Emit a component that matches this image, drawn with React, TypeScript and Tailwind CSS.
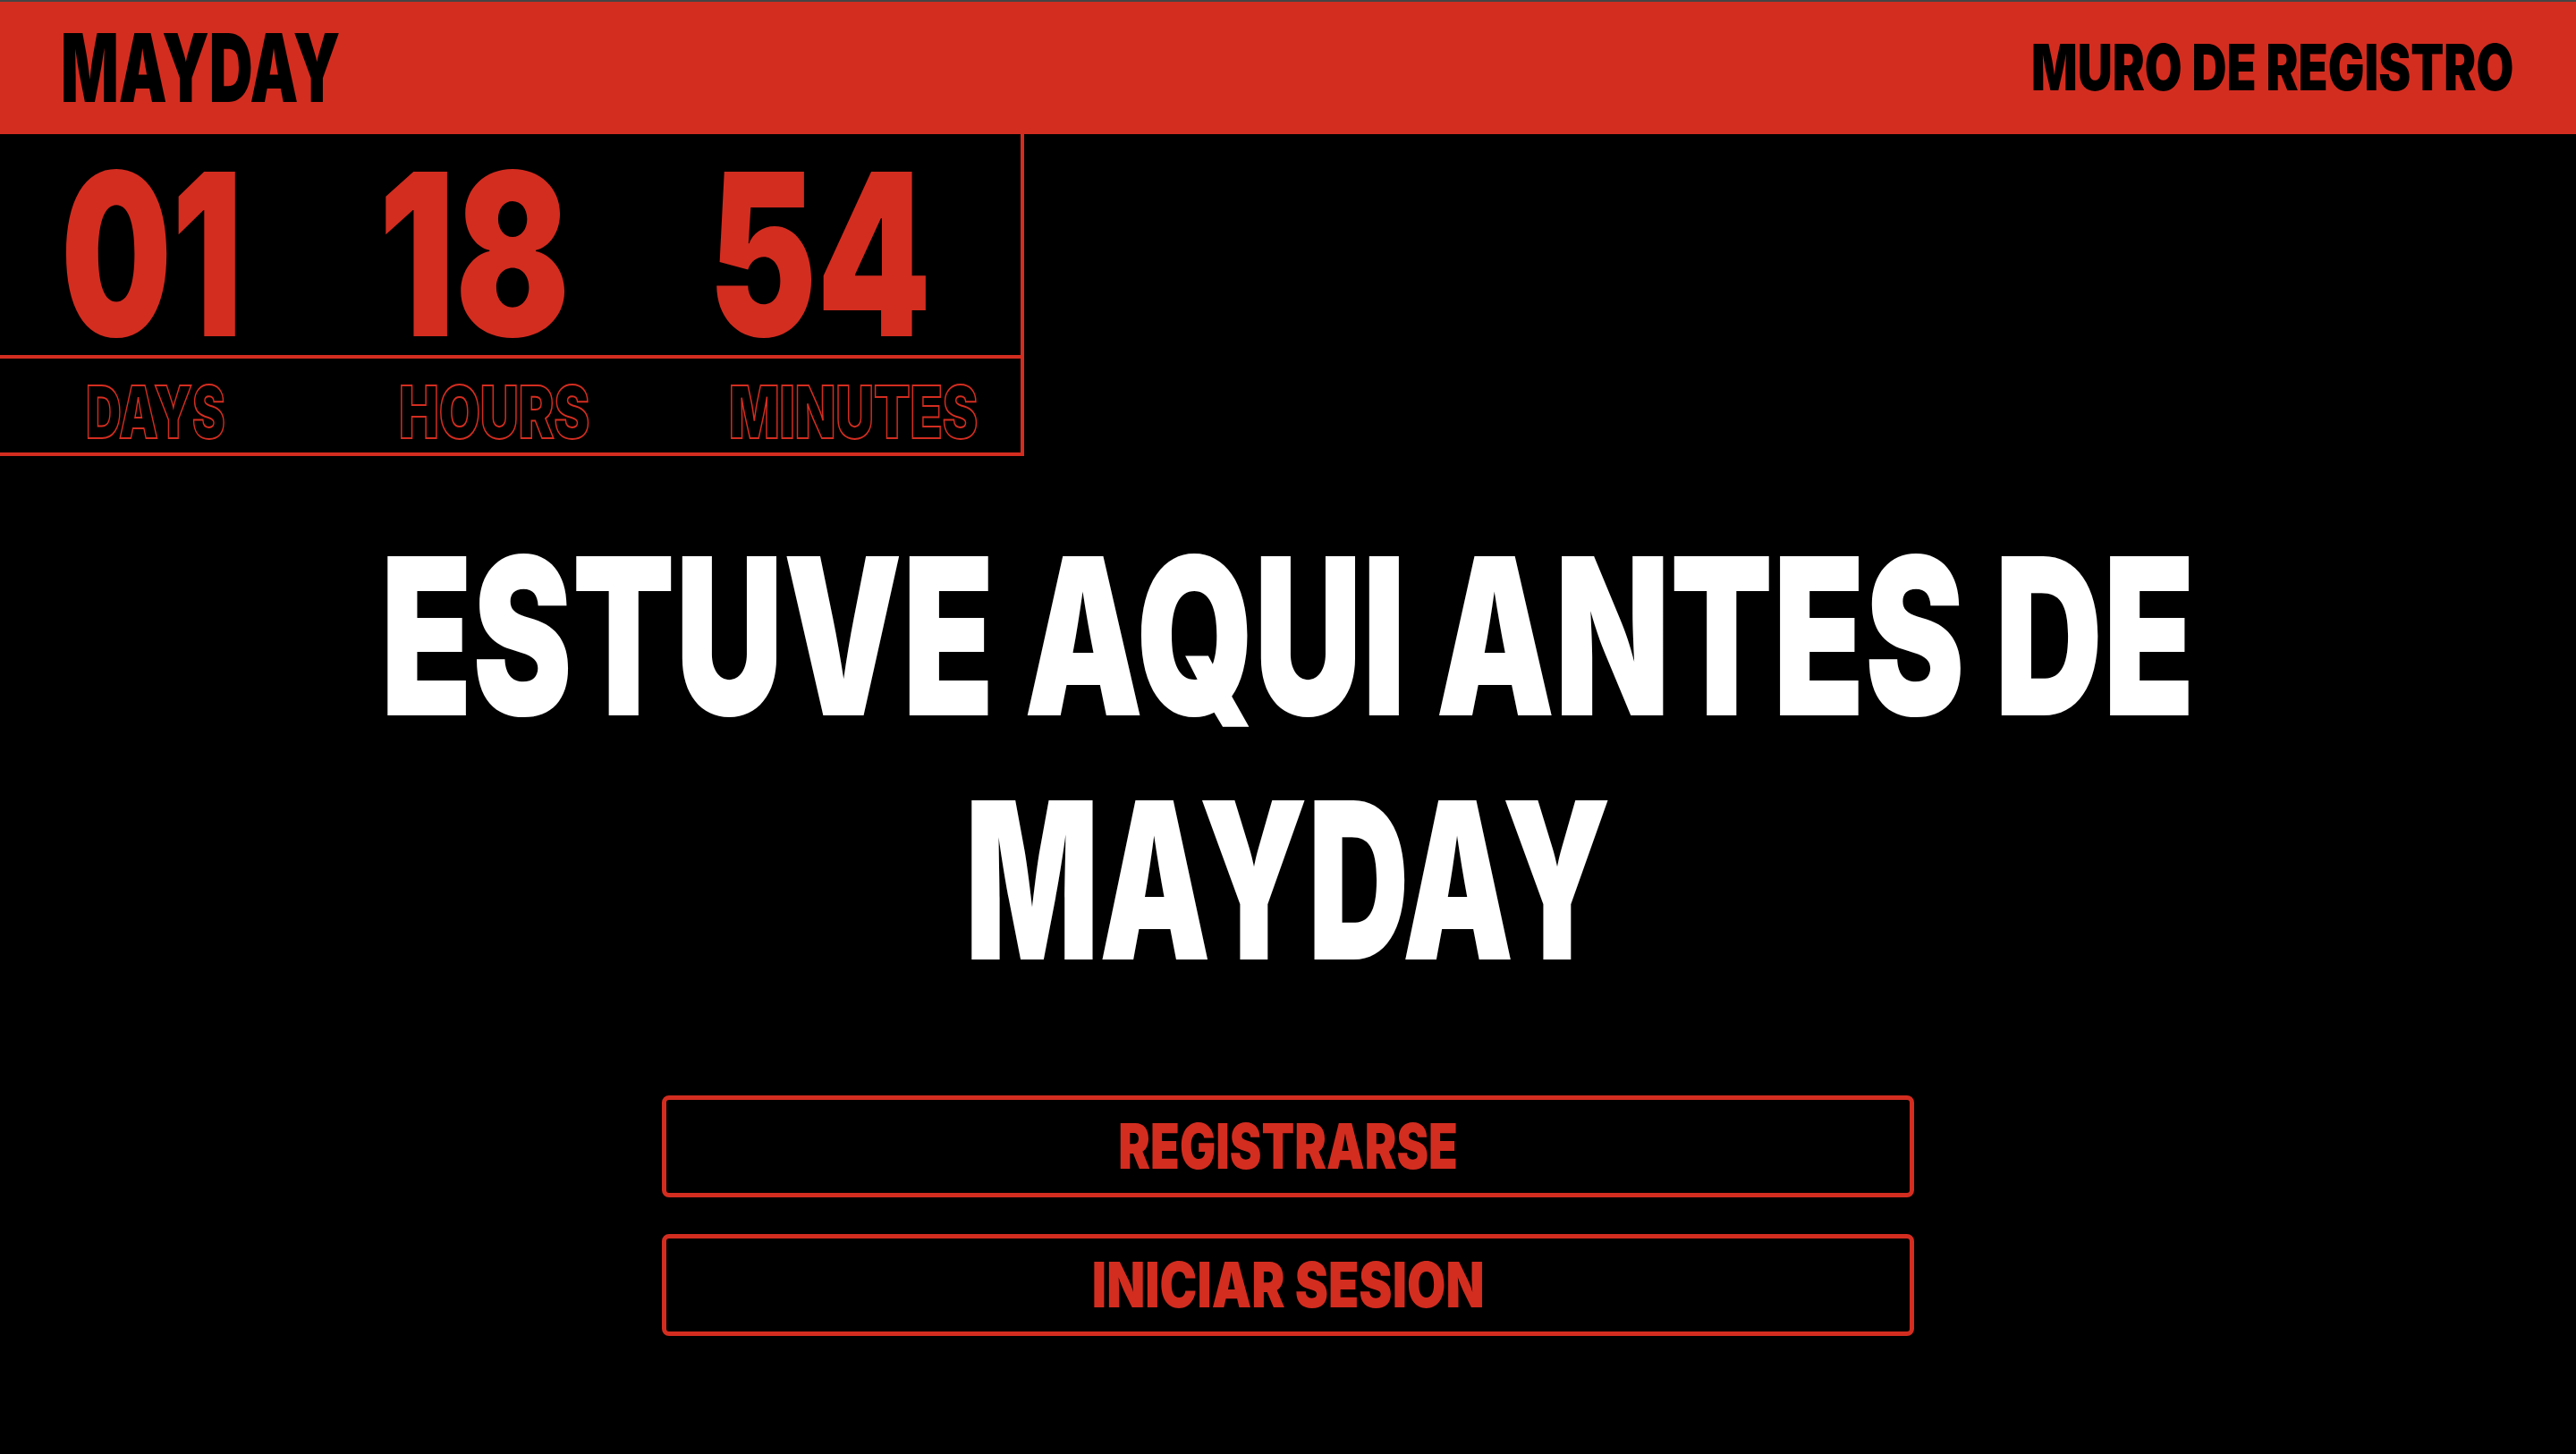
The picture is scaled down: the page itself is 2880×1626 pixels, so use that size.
const Header = () => (
  <header className="h-[150px] border-t-2 border-[#444] bg-[#d32d20] flex items-center justify-between pl-[68px] pr-[70px]">
    <span className="inline-block origin-left scale-x-[0.64] text-[106px] leading-none font-black text-black">MAYDAY</span>
    <span className="inline-block origin-right scale-x-[0.756] text-[71.5px] leading-none font-black text-black whitespace-nowrap">
      MURO DE REGISTRO
    </span>
  </header>
);

const Countdown = () => (
  <div className="w-[1145px] border-r-4 border-b-4 border-[#d32d20]">
    <div className="h-[251px] border-b-4 border-[#d32d20] grid grid-cols-[355px_369px_1fr] items-start pl-[68px] pt-[33px]">
      <span className="inline-block origin-left scale-x-[0.69] text-[253px] leading-[0.8] font-black text-[#d32d20]">01</span>
      <span className="inline-block origin-left scale-x-[0.75] text-[253px] leading-[0.8] font-black text-[#d32d20]">18</span>
      <span className="inline-block origin-left scale-x-[0.72] text-[253px] leading-[0.8] font-black text-[#d32d20]">54</span>
    </div>
    <div className="h-[105px] grid grid-cols-[350px_369px_1fr] items-start pl-[96px] pt-[20px]">
      <span className="inline-block origin-left scale-x-[0.68] text-[81px] leading-none font-black text-transparent [-webkit-text-stroke:2px_#d32d20]">DAYS</span>
      <span className="inline-block origin-left scale-x-[0.735] text-[81px] leading-none font-black text-transparent [-webkit-text-stroke:2px_#d32d20]">HOURS</span>
      <span className="inline-block origin-left scale-x-[0.73] text-[81px] leading-none font-black text-transparent [-webkit-text-stroke:2px_#d32d20]">MINUTES</span>
    </div>
  </div>
);

const Hero = () => (
  <h1 className="mt-[65px] flex flex-col items-center text-white font-black">
    <span className="inline-block whitespace-nowrap scale-x-[0.684] text-[245px] leading-[273px]">ESTUVE AQUI ANTES DE</span>
    <span className="inline-block whitespace-nowrap scale-x-[0.64] text-[245px] leading-[273px]">MAYDAY</span>
  </h1>
);

const Actions = () => (
  <div className="mt-[104px] flex flex-col items-center gap-[41px]">
    <button className="w-[1400px] h-[114px] border-[5px] border-[#d32d20] rounded-[8px] flex items-center justify-center">
      <span className="inline-block scale-x-[0.765] text-[70px] leading-none font-black text-[#d32d20]">REGISTRARSE</span>
    </button>
    <button className="w-[1400px] h-[114px] border-[5px] border-[#d32d20] rounded-[8px] flex items-center justify-center">
      <span className="inline-block scale-x-[0.80] text-[70px] leading-none font-black text-[#d32d20] whitespace-nowrap">INICIAR SESION</span>
    </button>
  </div>
);

export default function App() {
  return (
    <div className="min-h-screen bg-black font-['Inter',sans-serif] overflow-hidden">
      <Header />
      <Countdown />
      <Hero />
      <Actions />
    </div>
  );
}
